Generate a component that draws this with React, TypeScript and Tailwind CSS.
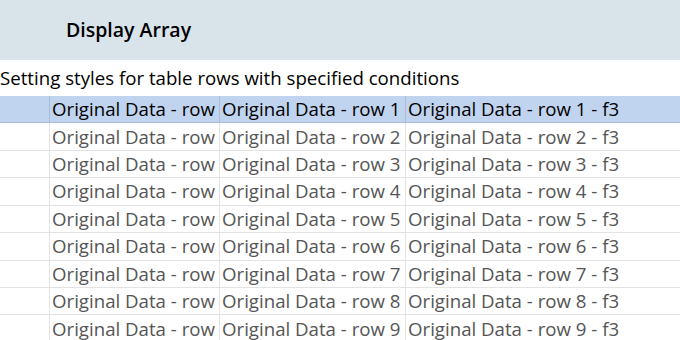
import React from "react";

const rows = Array.from({ length: 9 }, (_, i) => i + 1);

const Row = ({ n, selected }: { n: number; selected: boolean }) => {
  const line = selected ? "border-[#a9bddb]" : "border-[#e3e3e3]";
  const cell = `border-l ${line} pl-[2px] overflow-hidden whitespace-nowrap flex items-center`;
  return (
    <div
      className={`grid grid-cols-[49px_170px_186px_1fr] h-[27.43px] border-b ${line} ${
        selected ? "bg-[#c1d4ef] text-black" : "bg-white text-[#555555]"
      }`}
    >
      <div></div>
      <div className={cell}>Original Data - row {n} - f1</div>
      <div className={cell}>Original Data - row {n} - f2</div>
      <div className={cell}>Original Data - row {n} - f3</div>
    </div>
  );
};

export default function App() {
  return (
    <div className="w-[680px] h-[340px] overflow-hidden bg-white font-['Open_Sans',sans-serif] text-[18.67px]">
      <div className="h-[60px] bg-[#d9e4ea] flex items-center pl-[66px]">
        <h1 className="text-[19.5px] font-semibold text-black">Display Array</h1>
      </div>
      <div className="h-[36px] flex items-center text-black">
        Setting styles for table rows with specified conditions
      </div>
      <div>
        {rows.map((n) => (
          <Row key={n} n={n} selected={n === 1} />
        ))}
      </div>
    </div>
  );
}
